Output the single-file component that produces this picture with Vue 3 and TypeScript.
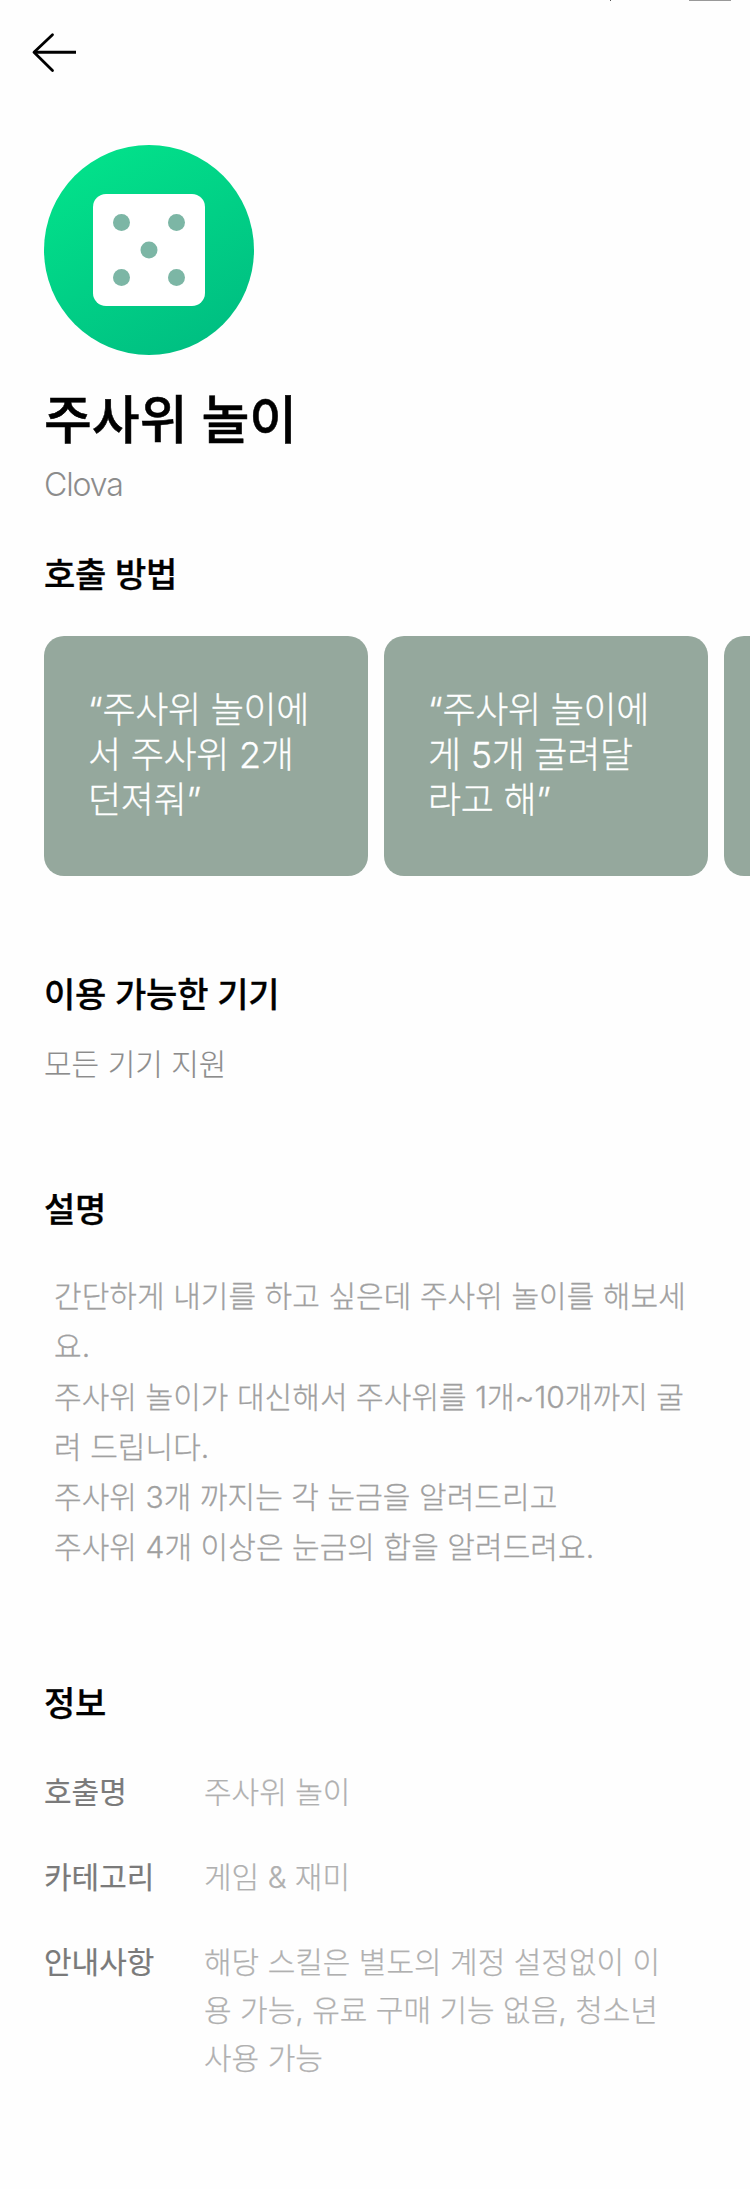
<script setup lang="ts">
interface InfoRow {
  label: string
  lines: string[]
}

const commands: string[][] = [
  ['“주사위 놀이에', '서 주사위 2개', '던져줘”'],
  ['“주사위 놀이에', '게 5개 굴려달', '라고 해”'],
  [],
]

const description: string[] = [
  '간단하게 내기를 하고 싶은데 주사위 놀이를 해보세',
  '요.',
  '주사위 놀이가 대신해서 주사위를 1개~10개까지 굴',
  '려 드립니다.',
  '주사위 3개 까지는 각 눈금을 알려드리고',
  '주사위 4개 이상은 눈금의 합을 알려드려요.',
]

const info: InfoRow[] = [
  { label: '호출명', lines: ['주사위 놀이'] },
  { label: '카테고리', lines: ['게임 & 재미'] },
  {
    label: '안내사항',
    lines: ['해당 스킬은 별도의 계정 설정없이 이', '용 가능, 유료 구매 기능 없음, 청소년', '사용 가능'],
  },
]

const pips: [number, number][] = [
  [77.5, 77.5],
  [132.5, 77.5],
  [105, 105],
  [77.5, 132.5],
  [132.5, 132.5],
]
</script>

<template>
  <main class="page">
    <div class="status">
      <i class="tick"></i>
      <i class="battery"></i>
    </div>
    <header class="bar">
      <button class="back" type="button" aria-label="뒤로">
        <svg width="46" height="42" viewBox="0 0 46 42" fill="none" stroke="#000">
          <path d="M3 20.3H45" stroke-width="3" />
          <path d="M21.5 2.8L3 20.3L21.5 38.5" stroke-width="2.8" stroke-linecap="round" stroke-linejoin="round" />
        </svg>
      </button>
    </header>

    <section class="hero">
      <svg class="logo" width="210" height="210" viewBox="0 0 210 210">
        <defs>
          <linearGradient id="logo-fill" x1="0.25" y1="0.07" x2="0.75" y2="0.93">
            <stop offset="0" stop-color="#02e08a" />
            <stop offset="1" stop-color="#00c082" />
          </linearGradient>
        </defs>
        <circle cx="105" cy="105" r="105" fill="url(#logo-fill)" />
        <rect x="49" y="49" width="112" height="112" rx="13" fill="#fff" />
        <circle v-for="([x, y], i) in pips" :key="i" :cx="x" :cy="y" r="8.5" fill="#7cb6a5" />
      </svg>
      <h1 class="title">주사위 놀이</h1>
      <p class="maker">Clova</p>
    </section>

    <section>
      <h2 class="heading">호출 방법</h2>
      <div class="cards">
        <div v-for="(card, i) in commands" :key="i" class="card">
          <div v-for="line in card" :key="line" class="card-line">{{ line }}</div>
        </div>
      </div>
    </section>

    <section class="devices">
      <h2 class="heading">이용 가능한 기기</h2>
      <p class="support">모든 기기 지원</p>
    </section>

    <section class="about">
      <h2 class="heading">설명</h2>
      <div class="description">
        <div v-for="line in description" :key="line" class="desc-line">{{ line }}</div>
      </div>
    </section>

    <section class="info">
      <h2 class="heading">정보</h2>
      <dl class="rows">
        <div v-for="row in info" :key="row.label" class="row">
          <dt>{{ row.label }}</dt>
          <dd>
            <div v-for="line in row.lines" :key="line">{{ line }}</div>
          </dd>
        </div>
      </dl>
    </section>
  </main>
</template>

<style>
body {
  margin: 0;
  background: #fefefe;
}
</style>

<style scoped>
.page {
  box-sizing: border-box;
  width: 750px;
  height: 2189px;
  overflow: hidden;
  background: #fefefe;
  color: #000;
  font-family: Inter, 'Noto Sans CJK KR', sans-serif;
  font-weight: 300;
  white-space: nowrap;
}
h1, h2, p, dl, dd, dt {
  margin: 0;
}
.status {
  display: flex;
  justify-content: flex-end;
  gap: 78px;
  height: 1px;
  padding-right: 19px;
}
.tick {
  width: 1px;
  background: #555;
}
.battery {
  width: 42px;
  background: #999;
}
.bar {
  height: 144px;
  padding: 31px 0 0 31px;
  box-sizing: border-box;
}
.back {
  display: block;
  padding: 0;
  border: 0;
  background: none;
}
.back svg,
.logo {
  display: block;
}
.hero {
  padding-left: 44px;
}
.title {
  margin-top: 31px;
  font-size: 52px;
  line-height: 70px;
  font-weight: 500;
  -webkit-text-stroke: 0.5px currentColor;
}
.maker {
  margin-top: 9px;
  font-size: 32px;
  line-height: 40px;
  letter-spacing: -1.1px;
  color: #8c8c8c;
}
.heading {
  padding-left: 44px;
  font-size: 34px;
  line-height: 44px;
  font-weight: 500;
  letter-spacing: -0.2px;
  -webkit-text-stroke: 0.3px currentColor;
}
.hero + section {
  margin-top: 48px;
}
.cards {
  display: flex;
  gap: 16px;
  margin-top: 39px;
  padding-left: 44px;
}
.card {
  box-sizing: border-box;
  flex: none;
  width: 324px;
  height: 240px;
  padding: 52px 44px 0;
  border-radius: 20px;
  background: #95a89d;
  color: #fff;
}
.card-line {
  font-size: 36px;
  line-height: 45px;
  letter-spacing: -0.3px;
  -webkit-text-stroke: 0.3px currentColor;
}
.devices {
  margin-top: 97px;
}
.support {
  margin-top: 27px;
  padding-left: 44px;
  font-size: 30px;
  line-height: 40px;
  color: #8c8c8c;
  -webkit-text-stroke: 0.2px currentColor;
}
.about {
  margin-top: 104px;
}
.description {
  margin-top: 39px;
  padding-left: 54px;
  color: #a0a0a0;
}
.desc-line {
  font-size: 30px;
  line-height: 50.3px;
  letter-spacing: 0.06px;
  -webkit-text-stroke: 0.3px currentColor;
}
.info {
  margin-top: 109px;
}
.rows {
  display: grid;
  gap: 37px;
  margin-top: 42px;
  padding-left: 44px;
}
.row {
  display: grid;
  grid-template-columns: 160px 1fr;
  font-size: 30px;
  line-height: 48px;
}
.row dt {
  color: #7a7a7a;
  font-weight: 400;
  -webkit-text-stroke: 0.2px currentColor;
}
.row dd {
  color: #b0b0b0;
  -webkit-text-stroke: 0.25px currentColor;
}
</style>
